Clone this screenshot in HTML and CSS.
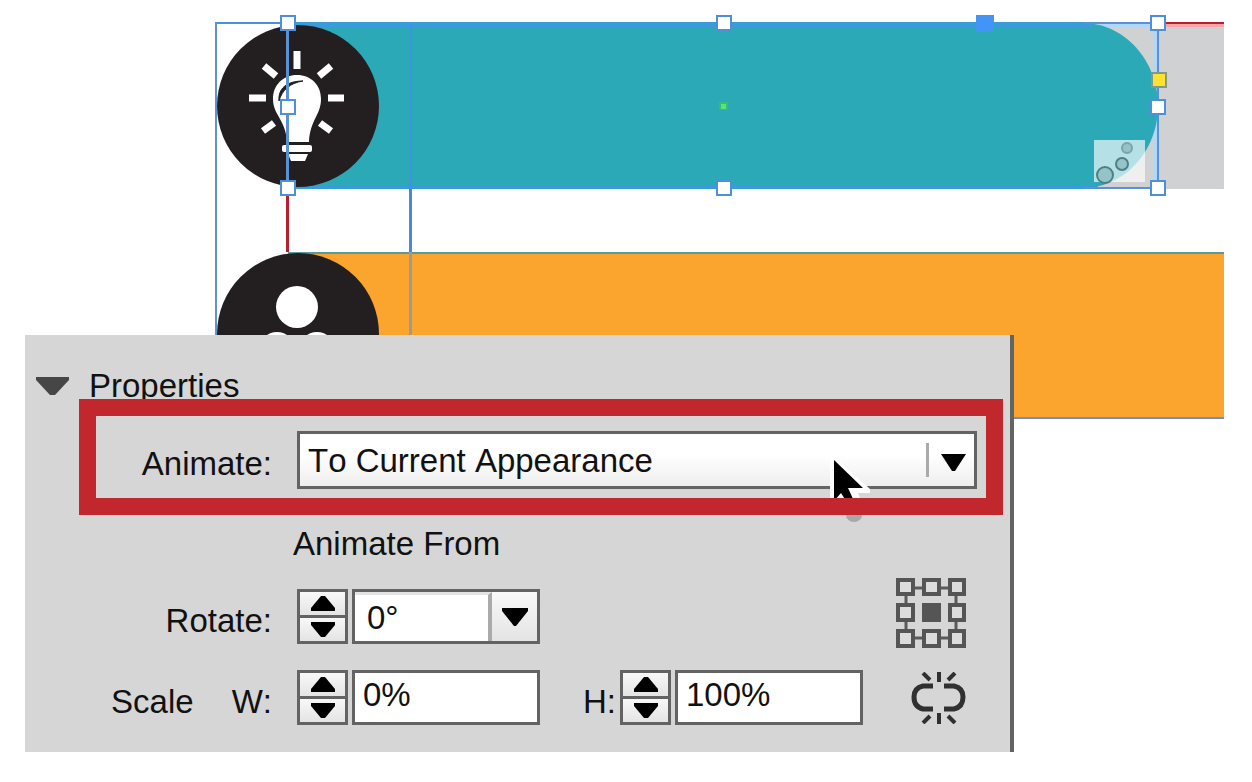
FILE: index.html
```html
<!DOCTYPE html>
<html lang="en">
<head>
    <meta charset="UTF-8">
    <meta name="viewport" content="width=device-width, initial-scale=1.0">
    <title>Animation Properties</title>
    <link rel="stylesheet" href="styles.css">
</head>
<body>
    <div class="stage">
        <svg class="artwork" viewBox="0 0 1252 420">
            <!-- Grey track behind the teal bar -->
            <rect x="1080" y="24" width="144" height="165" fill="#d0d1d3"/>
            <rect x="1080" y="24" width="78" height="3" fill="#b0d6f8"/>
            <rect x="1154" y="24" width="3" height="164" fill="#b0d6f8"/>
            <rect x="1158" y="24" width="66" height="3" fill="#fca5a9"/>
            <rect x="1158" y="22" width="66" height="2" fill="#b3202f"/>

            <!-- Teal bar -->
            <path d="M288 23 H1083 C1124 23 1158 60 1158 106 C1158 151 1124 188 1083 188 H288 Z" fill="#2ca9b7"/>
            <rect x="288" y="22" width="804" height="5" fill="#3a9bdb"/>
            <rect x="288" y="185" width="810" height="4" fill="#3a9bdb"/>

            <!-- Orange bar -->
            <rect x="288" y="252" width="936" height="166" fill="#fba52f"/>
            <rect x="288" y="252" width="936" height="2" fill="#5a9a9a"/>
            <rect x="288" y="417" width="936" height="2" fill="#6f8fc0"/>

            <!-- Light bulb badge -->
            <circle cx="298" cy="106" r="81" fill="#231f20"/>
            <g stroke="#fff" stroke-width="7">
                <path d="M297 51 V69"/>
                <path d="M249 98 H266"/>
                <path d="M328 98 H344"/>
                <path d="M264 66 L276 76"/>
                <path d="M331 66 L319 76"/>
                <path d="M263 131 L274 123"/>
                <path d="M331 131 L320 123"/>
            </g>
            <path d="M297 75 C283 75 273 85 273 99 C273 115 286 120 287 142 H309 C310 120 321 115 321 99 C321 85 311 75 297 75 Z" fill="#fff"/>
            <path d="M279 101 C278 89 286 81 303 81 C290 83 282 90 279 101 Z" fill="#231f20" stroke="#231f20"/>
            <rect x="282" y="145" width="30" height="7" rx="2" fill="#fff"/>
            <path d="M288 154 H308 L305 161 H291 Z" fill="#fff"/>

            <!-- People badge -->
            <circle cx="298" cy="334" r="81" fill="#231f20"/>
            <circle cx="297" cy="307" r="21" fill="#fff"/>
            <circle cx="277" cy="350" r="18" fill="#fff"/>
            <circle cx="317" cy="350" r="18" fill="#fff"/>

            <!-- Frame edges and guides -->
            <rect x="215" y="22" width="73" height="2" fill="#4a90d9"/>
            <rect x="215" y="22" width="2" height="396" fill="#5f92cf"/>
            <rect x="409" y="24" width="3" height="164" fill="#3d94e0"/>
            <rect x="409" y="188" width="3" height="64" fill="#4a88d8"/>
            <rect x="409" y="252" width="3" height="166" fill="#9a9a98"/>
            <rect x="286" y="188" width="3" height="64" fill="#b3202f"/>
            <rect x="286" y="22" width="3" height="166" fill="#5b8fd6"/>
            <rect x="1083" y="22" width="76" height="2" fill="#5b8fd6"/>
            <rect x="1083" y="187" width="76" height="2" fill="#5b8fd6"/>
            <rect x="1157" y="22" width="2" height="166" fill="#5b8fd6"/>

            <!-- Motion icon -->
            <rect x="1094" y="140" width="51" height="42" fill="#fff" opacity="0.65"/>
            <g fill="#94c4c6" stroke="#4f7f84" stroke-width="2">
                <circle cx="1105" cy="175" r="8"/>
                <circle cx="1122" cy="164" r="6"/>
                <circle cx="1127" cy="148" r="5" stroke="#7ba3a8"/>
            </g>

            <!-- Handles -->
            <g fill="#fff" stroke="#4d8fdb" stroke-width="2">
                <rect x="281" y="16" width="14" height="14"/>
                <rect x="717" y="16" width="14" height="14"/>
                <rect x="1151" y="16" width="14" height="14"/>
                <rect x="281" y="100" width="14" height="14"/>
                <rect x="1151" y="100" width="14" height="14"/>
                <rect x="281" y="181" width="14" height="14"/>
                <rect x="717" y="181" width="14" height="14"/>
                <rect x="1151" y="181" width="14" height="14"/>
                <rect x="1152" y="73" width="14" height="14" fill="#ffe12e" stroke="#7f9a8c"/>
            </g>
            <rect x="976" y="15" width="18" height="17" fill="#4394f7"/>
            <rect x="719" y="102" width="9" height="8" fill="#35bd70"/>
            <rect x="721" y="104" width="5" height="5" fill="#5be27c"/>
        </svg>

        <form class="panel">
            <h2 class="panel-title">
                <svg class="twisty" width="33" height="18" viewBox="0 0 33 18"><path d="M0 0 H33 V3 L19 18 H14 L0 3 Z" fill="#464646"/></svg>
                Properties
            </h2>

            <div class="row highlighted">
                <label class="label" for="animate">Animate:</label>
                <div class="select-box">
                    <select id="animate" class="field">
                        <option>To Current Appearance</option>
                    </select>
                    <svg class="select-arrow" width="41" height="34" viewBox="0 0 41 34">
                        <rect width="3" height="34" fill="#aaa"/>
                        <path d="M15 11 H40 L29 28 H26 Z" fill="#000"/>
                    </svg>
                    <svg class="pointer" width="44" height="72" viewBox="0 0 44 72">
                        <ellipse cx="26" cy="62" rx="8" ry="7" fill="#a8a8a8"/>
                        <path d="M2 0 L42 36 V40 H30 L34 50 H2 Z" fill="#fff"/>
                        <path d="M6 7 L35 35 H20 L26 48 H18 L13 40 L6 48 Z" fill="#000"/>
                    </svg>
                </div>
            </div>

            <div class="subtitle">Animate From</div>

            <div class="row">
                <label class="label" for="rotate">Rotate:</label>
                <div class="stepper">
                    <button type="button" aria-label="Increase rotation"><svg width="24" height="15" viewBox="0 0 24 15"><path d="M10 0 H14 L24 12 V15 H0 V12 Z"/></svg></button>
                    <button type="button" aria-label="Decrease rotation"><svg width="24" height="15" viewBox="0 0 24 15"><path d="M0 0 H24 V3 L14 15 H10 L0 3 Z"/></svg></button>
                </div>
                <div class="combo">
                    <input id="rotate" class="field" type="text" value="0°">
                    <button type="button" aria-label="Rotation presets"><svg width="26" height="18" viewBox="0 0 26 18"><path d="M0 0 H26 V3 L14 18 H12 L0 3 Z"/></svg></button>
                </div>
                <button type="button" class="icon-button" aria-label="Reference point">
                    <svg width="70" height="77" viewBox="0 0 70 77">
                        <path d="M10 10 H60 V60 H10 Z" fill="none" stroke="#5a5a5a" stroke-width="3"/>
                        <g fill="#dcdcdc" stroke="#555" stroke-width="4">
                            <rect x="2" y="2" width="15" height="14"/>
                            <rect x="28" y="2" width="15" height="14"/>
                            <rect x="54" y="2" width="14" height="14"/>
                            <rect x="2" y="27" width="15" height="15"/>
                            <rect x="54" y="27" width="14" height="15"/>
                            <rect x="2" y="53" width="15" height="15"/>
                            <rect x="28" y="53" width="15" height="15"/>
                            <rect x="54" y="53" width="14" height="15"/>
                        </g>
                        <rect x="26" y="25" width="19" height="19" fill="#555"/>
                    </svg>
                </button>
            </div>

            <div class="row">
                <label class="label scale-label" for="scale-w"><span>Scale</span><span>W:</span></label>
                <div class="stepper">
                    <button type="button" aria-label="Increase width"><svg width="24" height="15" viewBox="0 0 24 15"><path d="M10 0 H14 L24 12 V15 H0 V12 Z"/></svg></button>
                    <button type="button" aria-label="Decrease width"><svg width="24" height="15" viewBox="0 0 24 15"><path d="M0 0 H24 V3 L14 15 H10 L0 3 Z"/></svg></button>
                </div>
                <input id="scale-w" class="field percent" type="text" value="0%">
                <label class="label height-label" for="scale-h">H:</label>
                <div class="stepper">
                    <button type="button" aria-label="Increase height"><svg width="24" height="15" viewBox="0 0 24 15"><path d="M10 0 H14 L24 12 V15 H0 V12 Z"/></svg></button>
                    <button type="button" aria-label="Decrease height"><svg width="24" height="15" viewBox="0 0 24 15"><path d="M0 0 H24 V3 L14 15 H10 L0 3 Z"/></svg></button>
                </div>
                <input id="scale-h" class="field percent" type="text" value="100%">
                <button type="button" class="icon-button" aria-label="Constrain scale">
                    <svg width="55" height="52" viewBox="0 0 55 52">
                        <g fill="none" stroke="#303030" stroke-width="5">
                            <path d="M22 14 H12 Q3 16 3 25 Q3 35 12 37 H22"/>
                            <path d="M33 14 H43 Q52 16 52 25 Q52 35 43 37 H33"/>
                        </g>
                        <g stroke="#303030" stroke-width="4">
                            <path d="M28 0 V10"/>
                            <path d="M28 41 V52"/>
                            <path d="M12 1 L19 8"/>
                            <path d="M44 1 L37 8"/>
                            <path d="M12 51 L19 44"/>
                            <path d="M44 51 L37 44"/>
                        </g>
                    </svg>
                </button>
            </div>
        </form>
    </div>
</body>
</html>
```

FILE: styles.css
```css
* {
    box-sizing: border-box;
}
body {
    margin: 0;
    background: #fff;
    color: #111;
    font-family: "Liberation Sans", Arial, sans-serif;
    font-size: 33px;
    font-kerning: none;
}
/* the panel shares one grid cell with the artwork and covers its lower part */
.stage {
    display: grid;
    align-items: start;
}
.artwork,
.panel {
    grid-area: 1 / 1;
}
.artwork {
    display: block;
    width: 100%;
}
.panel {
    position: relative;
    margin: 335px 238px 0 25px;
    padding-bottom: 27px;
    background: #d6d6d6;
    border-right: 4px solid #636363;
}
.panel-title {
    display: flex;
    align-items: center;
    gap: 20px;
    margin: 0;
    padding: 38px 0 0 11px;
    font-size: 33px;
    font-weight: normal;
    line-height: 26px;
}
.row {
    display: flex;
    align-items: center;
    height: 55px;
    margin-bottom: 26px;
    padding-right: 44px;
}
.row:last-child {
    margin-bottom: 0;
}
.label {
    width: 247px;
    margin-right: 25px;
    padding-top: 8px;
    line-height: 38px;
    text-align: right;
}
.scale-label {
    display: flex;
    justify-content: flex-end;
    gap: 38px;
}
.height-label {
    width: 76px;
    margin-right: 4px;
}
.highlighted {
    position: relative;
    height: auto;
    margin: 0 7px 0 54px;
    padding: 32px 26px 26px 0;
}
.highlighted::after {
    content: "";
    position: absolute;
    inset: 0;
    border: 17px solid #c1272d;
    pointer-events: none;
}
.highlighted .label {
    width: 193px;
}
.subtitle {
    margin-bottom: 16px;
    padding-left: 268px;
    line-height: 58px;
}
.field {
    height: 55px;
    margin: 0;
    padding: 0 8px;
    border: 3px solid #636363;
    border-radius: 0;
    background: #fff;
    color: #111;
    font: inherit;
    font-kerning: none;
}
.select-box {
    position: relative;
    flex: 1;
}
.select-box .field {
    display: block;
    width: 100%;
    height: 58px;
    appearance: none;
    background: linear-gradient(#fff 40%, #eee);
}
.select-arrow {
    position: absolute;
    top: 12px;
    right: 10px;
    pointer-events: none;
}
.pointer {
    position: absolute;
    top: 22px;
    right: 105px;
    pointer-events: none;
}
.stepper {
    display: flex;
    flex-direction: column;
    gap: 3px;
    width: 51px;
    height: 55px;
    margin-right: 4px;
    border: 3px solid #636363;
    background: #636363;
}
.stepper button,
.combo button {
    display: flex;
    flex: 1;
    align-items: center;
    justify-content: center;
    margin: 0;
    padding: 0;
    border: 0;
    background: linear-gradient(#f8f8f8, #e4e4e4);
}
.combo {
    display: flex;
    width: 188px;
    height: 55px;
    border: 3px solid #636363;
}
.combo .field {
    width: 137px;
    height: 49px;
    padding: 0 12px;
    border: 0;
    border-top: 3px solid #e4e4e4;
    border-right: 4px solid #aaa;
}
.percent {
    width: 188px;
    padding-bottom: 6px;
}
.icon-button {
    margin: 0 0 0 auto;
    padding: 0;
    border: 0;
    background: none;
}
.icon-button svg {
    display: block;
}
```
